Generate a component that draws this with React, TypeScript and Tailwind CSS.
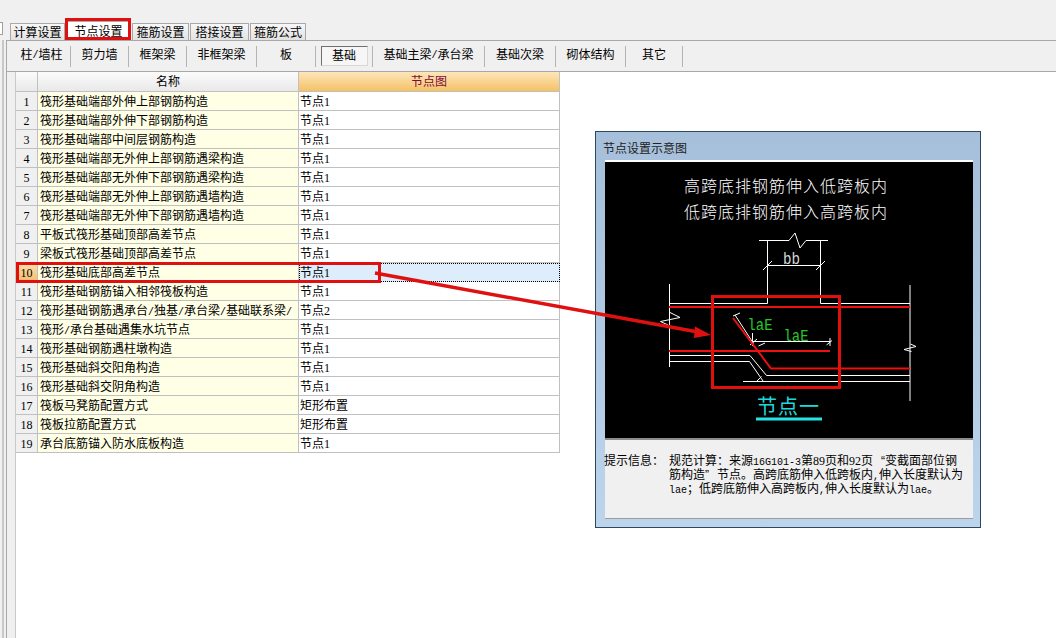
const FONT = "font-['Liberation_Sans','Noto_Sans_CJK_SC',sans-serif]";

const TABS = [
  { label: '计算设置', width: 'w-[55px]' },
  { label: '节点设置', width: 'w-[65px]', active: true },
  { label: '箍筋设置', width: 'w-[57px]' },
  { label: '搭接设置', width: 'w-[59px]' },
  { label: '箍筋公式', width: 'w-[56px]' },
];

const TOOLS = [
  { label: '柱/墙柱', width: 'w-[58px]' },
  { label: '剪力墙', width: 'w-[58px]' },
  { label: '框架梁', width: 'w-[58px]' },
  { label: '非框架梁', width: 'w-[70px]' },
  { label: '板', width: 'w-[59px]' },
  { label: '基础', width: 'w-[57px]', active: true },
  { label: '基础主梁/承台梁', width: 'w-[112px]' },
  { label: '基础次梁', width: 'w-[71px]' },
  { label: '砌体结构', width: 'w-[70px]' },
  { label: '其它', width: 'w-[57px]' },
];

const ROWS = [
  ['筏形基础端部外伸上部钢筋构造', '节点1'],
  ['筏形基础端部外伸下部钢筋构造', '节点1'],
  ['筏形基础端部中间层钢筋构造', '节点1'],
  ['筏形基础端部无外伸上部钢筋遇梁构造', '节点1'],
  ['筏形基础端部无外伸下部钢筋遇梁构造', '节点1'],
  ['筏形基础端部无外伸上部钢筋遇墙构造', '节点1'],
  ['筏形基础端部无外伸下部钢筋遇墙构造', '节点1'],
  ['平板式筏形基础顶部高差节点', '节点1'],
  ['梁板式筏形基础顶部高差节点', '节点1'],
  ['筏形基础底部高差节点', '节点1'],
  ['筏形基础钢筋锚入相邻筏板构造', '节点1'],
  ['筏形基础钢筋遇承台/独基/承台梁/基础联系梁/', '节点2'],
  ['筏形/承台基础遇集水坑节点', '节点1'],
  ['筏形基础钢筋遇柱墩构造', '节点1'],
  ['筏形基础斜交阳角构造', '节点1'],
  ['筏形基础斜交阴角构造', '节点1'],
  ['筏板马凳筋配置方式', '矩形布置'],
  ['筏板拉筋配置方式', '矩形布置'],
  ['承台底筋锚入防水底板构造', '节点1'],
];

// Latin runs in the original are half-width (6px): digits in serif, the rest small mono.
// Curly quotes take a full cell there, the CJK font here sets them narrow.
function Mixed({ text }: { text: string }) {
  const parts = text.split(/([\x21-\x7e]+|[\u201c\u201d])/);
  return (
    <>
      {parts.map((part, i) => {
        if (i % 2 === 0) return part;
        if (part === '\u201c') {
          return (
            <span key={i} className="inline-block w-[12px] text-right">
              {part}
            </span>
          );
        }
        if (part === '\u201d') {
          return (
            <span key={i} className="inline-block w-[12px] text-left">
              {part}
            </span>
          );
        }
        if (/^\d+$/.test(part)) {
          return (
            <span key={i} className="font-['Liberation_Serif',serif] text-[12px]">
              {part}
            </span>
          );
        }
        return (
          <span key={i} className="font-['Liberation_Mono',monospace] text-[10px]">
            {part}
          </span>
        );
      })}
    </>
  );
}

function Tabs() {
  return (
    <div className="flex h-[40px] items-end">
      <div className="mb-[5px] h-[13px] w-[3px] border-y border-r border-[#a0a0a0] bg-white" />
      <div className="ml-[7px] flex items-end gap-[1px]">
        {TABS.map((tab) => (
          <div
            key={tab.label}
            className={`flex items-center justify-center border-x border-t border-[#a9a9a9] pt-[1px] text-[12px] text-black ${tab.width} ${
              tab.active
                ? 'h-[19px] bg-white'
                : 'h-[17px] bg-gradient-to-b from-[#f7f7f7] to-[#e2e2e2]'
            }`}
          >
            {tab.label}
          </div>
        ))}
      </div>
    </div>
  );
}

function Toolbar() {
  return (
    <div className="flex h-[31px] items-center border-b border-[#a8a8a8] pl-[6px]">
      {TOOLS.map((tool) => (
        <div
          key={tool.label}
          className={`flex h-[21px] items-center justify-center border-r border-[#b4b4b4] text-[12px] text-black ${tool.width} ${
            tool.active ? '' : 'pb-[2px]'
          }`}
        >
          {tool.active ? (
            <span className="flex h-[20px] w-[47px] items-center justify-center border border-t-[#707070] border-l-[#707070] border-r-[#d8d8d8] border-b-[#d8d8d8] bg-[#f6f6f6]">
              {tool.label}
            </span>
          ) : (
            <Mixed text={tool.label} />
          )}
        </div>
      ))}
    </div>
  );
}

function NodeTable() {
  const line = 'border-b border-r border-[#c0c0c0]';
  return (
    <div className="grid w-[544px] grid-cols-[22px_261px_261px] text-[12px] leading-[20px] text-black">
      <div className={`h-[20px] bg-gradient-to-b from-[#fbfbfb] to-[#e9e9e9] ${line}`} />
      <div className={`h-[20px] bg-gradient-to-b from-[#fbfbfb] to-[#e9e9e9] text-center leading-[21px] ${line}`}>名称</div>
      <div className={`h-[20px] bg-gradient-to-b from-[#fde6ba] to-[#f5c163] text-center leading-[21px] text-[#7d0b3a] ${line}`}>节点图</div>
      {ROWS.map(([name, value], i) => {
        const selected = i === 9;
        return (
          <div key={i} className="contents">
            <div
              className={`h-[19px] text-center ${line} ${
                selected ? 'bg-gradient-to-b from-[#fde0ad] to-[#f6bd70]' : 'bg-[#f0f0f0]'
              }`}
            >
              <Mixed text={String(i + 1)} />
            </div>
            <div className={`h-[19px] overflow-hidden whitespace-nowrap bg-[#ffffe5] pl-[2px] ${line}`}>
              <Mixed text={name} />
            </div>
            <div
              className={`h-[19px] ${
                selected
                  ? 'border border-dotted border-black bg-[#ddedfb] leading-[18px]'
                  : `bg-white pl-[1px] ${line}`
              }`}
            >
              <Mixed text={value} />
            </div>
          </div>
        );
      })}
    </div>
  );
}

function Diagram() {
  const white = { stroke: '#fff', strokeWidth: 1, fill: 'none' };
  const red = { stroke: '#ee1010', strokeWidth: 2, fill: 'none' };
  const mono = 'Liberation Mono, monospace';
  return (
    <svg viewBox="605 228 367 210" className="mt-[2px] block h-[210px] w-[367px]">
      {/* column */}
      <path {...white} d="M759 240.5H789L795 233L800 248L806 240.5H828" />
      <path {...white} d="M767.5 240V303.5H669M820.5 240V303.5H910" />
      <path {...white} d="M767.5 265.5H820.5M763 270L772 261M816 270L825 261" />
      {/* outer edges and break marks */}
      <path {...white} d="M669.5 284V367M910 285V401" />
      <path {...white} d="M670 312.5L680 317.5L660.5 321.5L668 325" />
      <path {...white} d="M910.5 344L916 346.5L904 349.5L911.5 351.5" />
      {/* slab steps */}
      <path {...white} d="M669 355.5H750L766.5 375.5H910" />
      <path {...white} d="M669 361.5H749.5L763 381" />
      <path {...white} d="M743 381.5H910M756.5 381.5L761.5 376.5" />
      {/* dimensions */}
      <path {...white} d="M735 315L753.5 343.5M733 316L740 313M750 345L757 339M752.5 333V346" />
      <path {...white} d="M753 341.5H830M758.5 346L765 343M826.5 345L832 340.5M830 338V346" />
      {/* rebar */}
      <path {...red} d="M669 307H910" />
      <path {...red} d="M669 351H830" />
      <path {...red} d="M733 318L771 368.5H910" />
      <text x="783" y="263.5" fill="#d8d8d8" fontSize="16" fontFamily={mono} textLength="17" lengthAdjust="spacingAndGlyphs">bb</text>
      <text x="747.5" y="330" fill="#28c828" fontSize="16" fontFamily={mono} textLength="25" lengthAdjust="spacingAndGlyphs">laE</text>
      <text x="783.5" y="341" fill="#28c828" fontSize="16" fontFamily={mono} textLength="25" lengthAdjust="spacingAndGlyphs">laE</text>
      <text x="757" y="414" fill="#1fd8d8" fontSize="20" letterSpacing="1" fontFamily="Noto Sans CJK SC, sans-serif">节点一</text>
      <path d="M756 419H822" stroke="#22e6e6" strokeWidth="3" />
    </svg>
  );
}

function PreviewWindow() {
  return (
    <div className="absolute left-[595px] top-[131px] flex h-[397px] w-[386px] flex-col border border-[#2d4a5c] bg-gradient-to-b from-[#a6bfda] to-[#bcd4ec] px-[9px]">
      <div className="-ml-[2px] h-[28px] pt-[9px] text-[12px] leading-[16px] text-[#222]">节点设置示意图</div>
      <div className="h-[278px] w-[368px] border-t-2 border-white bg-black">
        <div className="pr-[6px] pt-[12px] text-center text-[16px] font-light leading-[26px] tracking-[1px] text-white">
          <div>高跨底排钢筋伸入低跨板内</div>
          <div>低跨底排钢筋伸入高跨板内</div>
        </div>
        <Diagram />
      </div>
      <div className="flex h-[81px] w-[368px] border-t-2 border-b border-t-[#8c8c8c] border-b-[#9c9c9c] bg-[#f0f0f0] pt-[15px] text-[12px] leading-[12px] text-black">
        <div className="-ml-[1px] w-[65px] shrink-0">提示信息：</div>
        <div className="whitespace-nowrap">
          <div><Mixed text="规范计算：来源16G101-3第89页和92页“变截面部位钢" /></div>
          <div><Mixed text="筋构造”节点。高跨底筋伸入低跨板内,伸入长度默认为" /></div>
          <div><Mixed text="lae；低跨底筋伸入高跨板内,伸入长度默认为lae。" /></div>
        </div>
      </div>
    </div>
  );
}

export default function App() {
  return (
    <div className={`relative flex h-[638px] w-[1056px] flex-col overflow-hidden bg-[#f0f0f0] ${FONT}`}>
      <Tabs />
      <div className="flex flex-1">
        <div className="w-[7px] border-r border-[#a8a8a8] pl-[2px]">
          <div className="h-full w-[2px] bg-[#c8c8c8]" />
        </div>
        <div className="flex flex-1 flex-col border-t border-[#a8a8a8]">
          <Toolbar />
          <div className="flex flex-1 pl-[8px]">
            <div className="flex-1 border-l border-[#c8c8c8] bg-white">
              <NodeTable />
            </div>
          </div>
        </div>
      </div>

      <PreviewWindow />

      {/* red markup drawn over the screenshot */}
      <div className="absolute left-[65px] top-[18px] h-[22px] w-[66px] border-[3px] border-[#e01010]" />
      <div className="absolute left-[16px] top-[262px] h-[21px] w-[365px] border-[3px] border-[#e01010]" />
      <div className="absolute left-[711px] top-[295px] h-[94px] w-[130px] border-[3px] border-[#e01010]" />
      <svg viewBox="0 0 1056 638" className="pointer-events-none absolute left-0 top-0 h-[638px] w-[1056px]">
        <path d="M375 273L698 332" stroke="#e01010" strokeWidth="3.5" fill="none" />
        <path d="M711 335L695 326.5L694 338Z" fill="#e01010" />
      </svg>
    </div>
  );
}
